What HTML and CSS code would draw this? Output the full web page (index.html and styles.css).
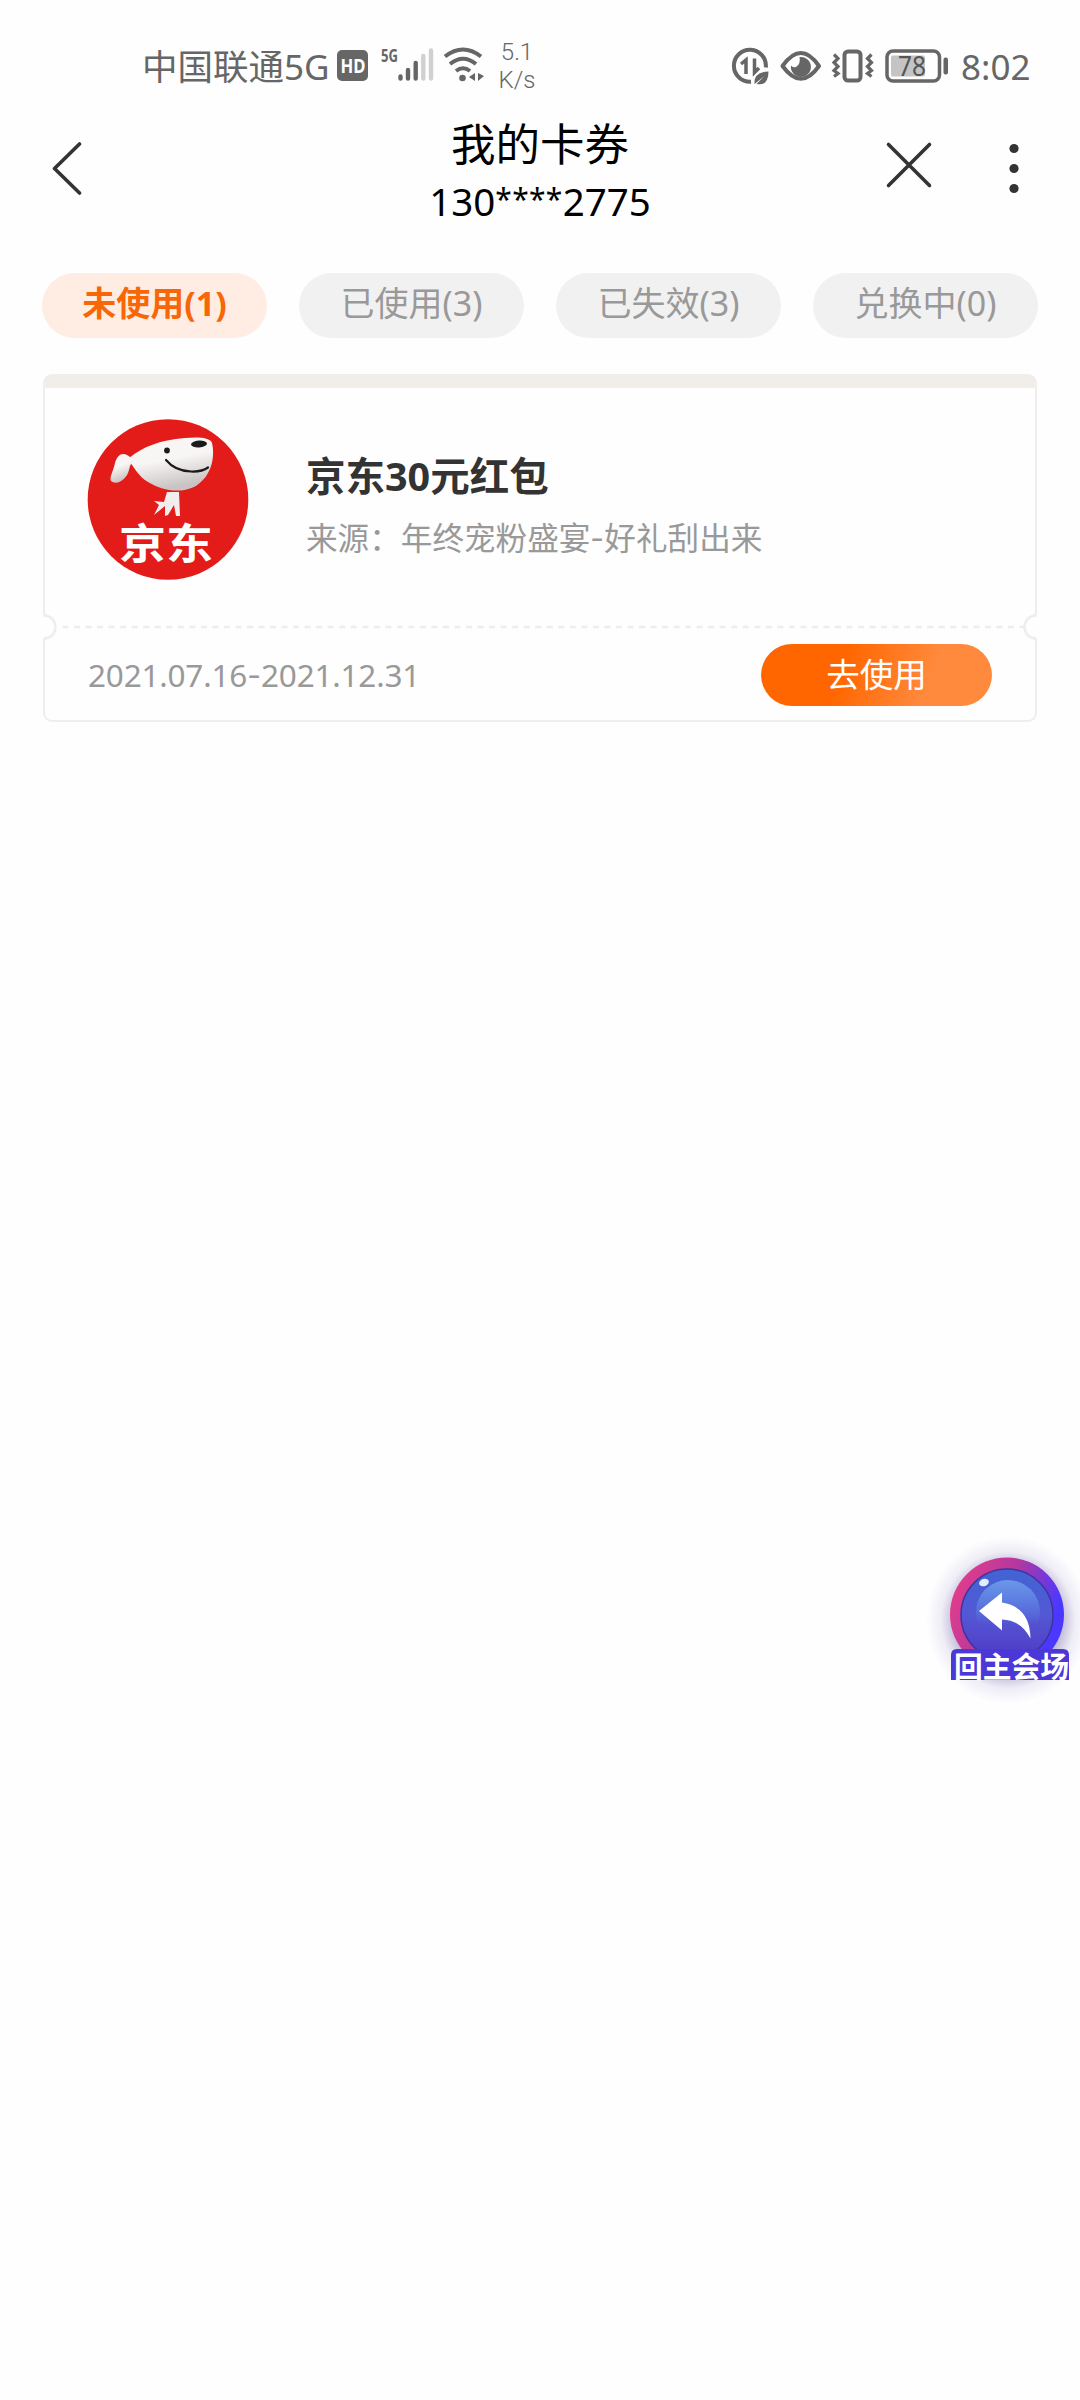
FILE: index.html
```html
<!DOCTYPE html>
<html lang="zh-CN">
<head>
<meta charset="utf-8">
<title>我的卡券</title>
<link rel="stylesheet" href="styles.css">
</head>
<body>
<div class="status">
  <span class="carrier">中国联通<span class="carrier-net">5G</span></span>
  <svg class="status-signal" width="150" height="60" viewBox="337 36 150 60">
    <rect x="337" y="50" width="31" height="31" rx="5" fill="#666"/>
    <text x="340.5" y="73" class="hd" textLength="25" lengthAdjust="spacingAndGlyphs">HD</text>
    <text x="381" y="62" class="mini-net" textLength="17" lengthAdjust="spacingAndGlyphs">5G</text>
    <g stroke="#666" stroke-width="4.4" stroke-linecap="round">
      <path d="M400.5 76.500v2M408 70v8.500M415.700 63v15.500"/>
      <path stroke="#d0d0d0" d="M423.300 56v22.500M431 50.500v28"/>
    </g>
    <g fill="none" stroke="#666" stroke-width="4">
      <path d="M445 56.500Q463 42.500 481 56.500M450 64Q463 53.500 476 64M456 71Q463 65.500 470 71"/>
    </g>
    <circle cx="462.500" cy="78" r="3.300" fill="#666"/>
    <path d="M475 73v8l-6-4zM478 73v8l6-5z" fill="#666"/>
  </svg>
  <span class="speed">5.1<br>K/s</span>
  <svg class="status-icons" width="220" height="40" viewBox="730 45.500 220 40">
    <g fill="none" stroke="#666" stroke-width="4">
      <path d="M751 81.200A16 16 0 1 1 765.800 67"/>
      <path d="M741 63.500l5-4V73.500M754.500 58v14l4.500-4.500" stroke-width="3.500"/>
      <path d="M782.500 65.500Q801 39.500 819 65.500Q801 91 782.500 65.500Z" stroke-linejoin="round"/>
      <rect x="844.500" y="51" width="16" height="29" rx="3.500"/>
      <path d="M834 54l4 4-4 4 4 4-4 4 4 3-4 3M871.500 54l-4 4 4 4-4 4 4 4-4 3 4 3" stroke-width="3.200"/>
      <rect x="887" y="50.500" width="52.500" height="30" rx="6" stroke-width="3.500"/>
    </g>
    <path d="M754.500 83.500q-1-12 14-12.500 0 15-12 12.500l8-8z" fill="#666"/>
    <path d="M799.500 56.500a10 10 0 1 1-8.500 8.500q1.500 2.500 5 1.500 5-3 3.500-10z" fill="#666"/>
    <rect x="891" y="55" width="34" height="21" rx="2" fill="#c4c4c4"/>
    <text x="898" y="75.500" class="battery-level" textLength="28" lengthAdjust="spacingAndGlyphs">78</text>
    <rect x="943.500" y="57" width="4.500" height="17" rx="2" fill="#666"/>
  </svg>
  <span class="clock">8:02</span>
</div>

<header class="nav">
  <svg class="nav-back" width="32" height="56" viewBox="50 140 32 56"><path d="M79.500 144L54.500 168.500L79.500 193" fill="none" stroke="#333" stroke-width="3.600" stroke-linecap="round" stroke-linejoin="round"/></svg>
  <div class="nav-text">
    <h1 class="nav-title">我的卡券</h1>
    <p class="nav-phone">130<span class="mask">****</span>2775</p>
  </div>
  <svg class="nav-actions" width="136" height="56" viewBox="884 140 136 56">
    <path d="M888.500 144.500L929.500 185.500M929.500 144.500L888.500 185.500" stroke="#333" stroke-width="3.600" stroke-linecap="round"/>
    <g fill="#333"><circle cx="1014" cy="148.500" r="4.600"/><circle cx="1014" cy="168.500" r="4.600"/><circle cx="1014" cy="188.500" r="4.600"/></g>
  </svg>
</header>

<nav class="tabs">
  <span class="tab tab-active">未使用(1)</span>
  <span class="tab">已使用(3)</span>
  <span class="tab">已失效(3)</span>
  <span class="tab">兑换中(0)</span>
</nav>

<section class="coupon">
  <div class="coupon-main">
    <svg class="logo" width="162" height="162" viewBox="0 0 162 162">
      <defs>
        <linearGradient id="face" x1="0" y1="0" x2="0.300" y2="1">
          <stop offset="0.500" stop-color="#f8f6f5"/><stop offset="1" stop-color="#c9c4c3"/>
        </linearGradient>
      </defs>
      <circle cx="81" cy="80.500" r="80.300" fill="#e41c19"/>
      <path d="M44 39C38 33 31 33 28 44C26 53 22 59 24 62C30 67 40 60 42 51Q43 46 45 43Z" fill="url(#face)"/>
      <path d="M42 39C56 28 72 21 98 19C110 18 123 18 125 24C129 42 122 60 107 68C92 75 74 71 61 63C51 57 48 49 42 42Z" fill="url(#face)"/>
      <ellipse cx="112" cy="25" rx="8" ry="3.500" fill="#1c1a1a" transform="rotate(-4 112 25)"/>
      <circle cx="80" cy="31.500" r="2.900" fill="#1c1a1a"/>
      <path d="M79 41Q88 52 104 52.500Q115 53 121 48.500" fill="none" stroke="#1c1a1a" stroke-width="2.200" stroke-linecap="round"/>
      <path d="M80 73H92L93 97H89L87 86L81 96L78 97L78 87L67 96L72 86L67 82L77 83Z" fill="#f3eeee"/>
      <text x="32" y="140" class="logo-name" textLength="94" lengthAdjust="spacingAndGlyphs">京东</text>
    </svg>
    <div class="coupon-info">
      <h2 class="coupon-title">京东30元红包</h2>
      <p class="coupon-source">来源：年终宠粉盛宴<span class="dash">-</span>好礼刮出来</p>
    </div>
  </div>
  <svg class="perforation" width="994" height="28" viewBox="0 0 994 28">
    <path d="M0 2h4v24H0zM990 2h4v24h-4z" fill="#fefefe"/>
    <path d="M1.500 0V2.500A11 11.500 0 0 1 1.500 25.500V28M992.500 0V2.500A11 11.500 0 0 0 992.500 25.500V28" fill="none" stroke="#f0eeed" stroke-width="2.500"/>
    <path d="M19.500 14H982" stroke="#eeeded" stroke-width="2.600" stroke-dasharray="6 5.530"/>
  </svg>
  <div class="coupon-foot">
    <span class="coupon-date">2021.07.16<span class="dash date-dash">-</span>2021.12.31</span>
    <button class="use">去使用</button>
  </div>
</section>

<div class="fab">
  <svg width="160" height="180" viewBox="0 0 160 180">
    <defs>
      <linearGradient id="ring" x1="0" y1="0.200" x2="1" y2="0.600">
        <stop offset="0" stop-color="#e83d88"/><stop offset="0.450" stop-color="#b5389f"/><stop offset="0.900" stop-color="#4b38ff"/>
      </linearGradient>
      <linearGradient id="ball" x1="0" y1="0" x2="0" y2="1">
        <stop offset="0" stop-color="#4264d4"/><stop offset="0.500" stop-color="#5358d4"/><stop offset="1" stop-color="#5138c4"/>
      </linearGradient>
      <linearGradient id="shine" x1="0" y1="0" x2="0" y2="1">
        <stop offset="0" stop-color="#6b98ea"/><stop offset="0.700" stop-color="#6b98ea" stop-opacity="0"/>
      </linearGradient>
      <radialGradient id="glow">
        <stop offset="0.650" stop-color="#5a4898" stop-opacity="0.380"/><stop offset="0.820" stop-color="#6a58a8" stop-opacity="0.100"/><stop offset="1" stop-color="#6d50c8" stop-opacity="0"/>
      </radialGradient>
    </defs>
    <ellipse cx="88" cy="90" rx="82" ry="84" fill="url(#glow)"/>
    <circle cx="87" cy="84.500" r="57" fill="url(#ring)"/>
    <circle cx="87" cy="85" r="46" fill="url(#ball)" stroke="#3b359f" stroke-width="1.500"/>
    <circle cx="88" cy="82" r="32" fill="url(#shine)"/>
    <ellipse cx="64" cy="52.500" rx="5" ry="3.600" fill="#e3efff" transform="rotate(-20 64 52.500)"/>
    <path d="M59 81L82 62.500V72.500Q110 77 110.500 108.500Q101 90 82 89.500V100.500Z" fill="#fff"/>
    <path d="M31 150V125Q31 119 37 119H143Q149 119 149 125V150Z" fill="#4b38d8"/>
    <text x="34" y="147.500" class="fab-label" textLength="115" lengthAdjust="spacingAndGlyphs">回主会场</text>
  </svg>
</div>
</body>
</html>
```
FILE: styles.css
```css
* { box-sizing: border-box; }
body {
  margin: 0;
  width: 1080px;
  height: 2400px;
  overflow: hidden;
  background: #fefefe;
  font-family: "Noto Sans", "Noto Sans CJK SC", sans-serif;
  color: #333;
}
h1, h2, p { margin: 0; font-weight: 400; }
svg { display: block; flex: none; }
text { font-family: "Noto Sans", "Noto Sans CJK SC", sans-serif; }

.status {
  display: flex;
  align-items: center;
  height: 110px;
  padding: 22px 49px 0 142px;
  color: #666;
}
.carrier {
  width: 195px;
  font-size: 35.500px;
  line-height: 50px;
  white-space: nowrap;
}
.carrier-net { font-size: 35px; }
.hd { font-size: 20px; font-weight: 700; fill: #fff; }
.mini-net { font-size: 18px; font-weight: 700; fill: #666; }
.speed {
  margin-left: 9px;
  width: 42px;
  font: 300 24px/28px Roboto, sans-serif;
  text-align: center;
}
.status-icons { margin-left: auto; }
.battery-level { font-size: 27px; fill: #555; }
.clock {
  margin-left: 11px;
  width: 70px;
  padding-top: 2px;
  font-size: 35px;
  line-height: 50px;
}

.nav {
  display: flex;
  justify-content: space-between;
  height: 163px;
  padding: 0 60px 0 50px;
  color: #000;
}
.nav-back { margin-top: 30px; margin-right: 104px; }
.nav-actions { margin-top: 30px; }
.nav-text { text-align: center; padding-left: 10px; }
.nav-title { font-size: 44.500px; line-height: 66px; padding-top: 1px; }
.nav-phone { font-size: 38.500px; line-height: 49px; }
.mask { font-size: 30px; line-height: 1; vertical-align: 6px; letter-spacing: 0.300px; }

.tabs {
  display: grid;
  grid-template-columns: repeat(4, 225px);
  gap: 32px;
  padding-left: 42px;
}
.tab {
  height: 65px;
  border-radius: 33px;
  background: #f1f1f1;
  color: #999;
  font-size: 34px;
  line-height: 61px;
  text-align: center;
}
.tab-active { background: #ffede3; color: #f76707; font-weight: 700; }

.coupon {
  width: 994px;
  height: 348px;
  margin: 36px 0 0 43px;
  border-radius: 9px;
  border: 2.500px solid #f0eeed;
  border-top: 14px solid #f1ede8;
  display: flex;
  flex-direction: column;
}
.coupon-main { display: flex; height: 225px; padding: 31px 0 0 42px; }
.coupon-info { margin-left: 57px; }
.coupon-title { margin-top: 29px; font-size: 39.500px; line-height: 56px; font-weight: 700; }
.coupon-source { margin-top: 12px; font-size: 31.600px; line-height: 44px; color: #999; white-space: nowrap; }
.dash { display: inline-block; width: 14px; text-align: center; transform: translateY(-2px) scaleX(1.250); }
.perforation { margin: 0 -2px; }
.coupon-foot {
  display: flex;
  align-items: center;
  justify-content: space-between;
  height: 68px;
  padding: 0 43px 0 43px;
}
.coupon-date { font-size: 31.500px; line-height: 44px; letter-spacing: -0.200px; color: #999; }
.use {
  width: 231px;
  height: 62px;
  padding: 0 0 5px;
  border: 0;
  border-radius: 31px;
  background: linear-gradient(110deg, #ff6600 35%, #ff8a3d 72%);
  color: #fff;
  font: 33.500px/54px "Noto Sans CJK SC", sans-serif;
}

.fab { position: absolute; left: 920px; top: 1530px; }
.fab-label { font-size: 29px; font-weight: 700; fill: #fff; }
.logo-name { font-size: 42px; font-weight: 700; fill: #fff; }
```
